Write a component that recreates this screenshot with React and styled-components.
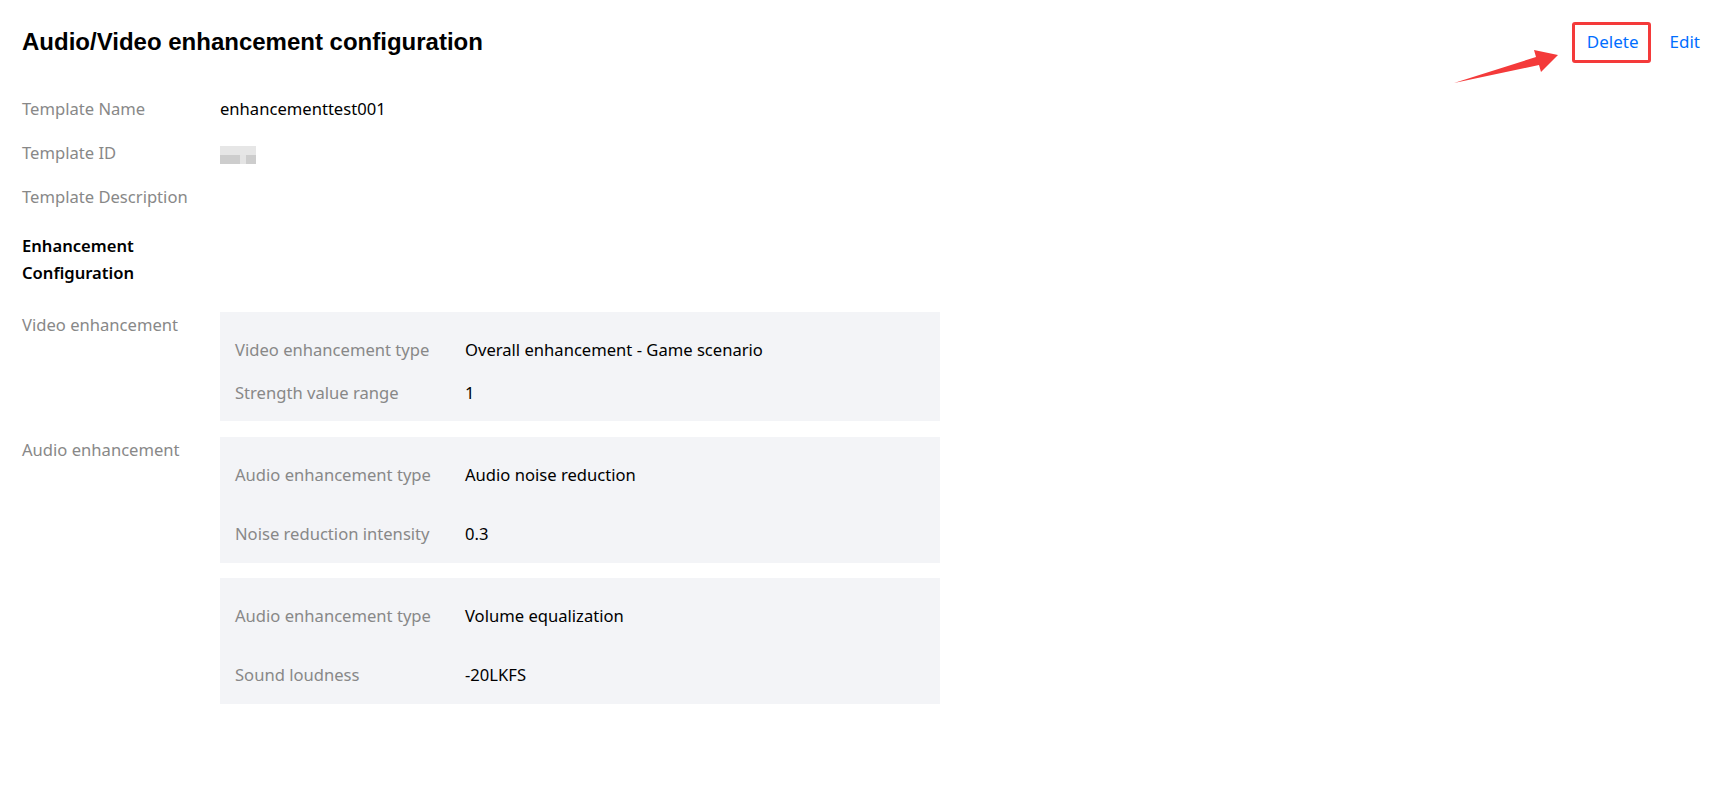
import React from "react";
import styled, { createGlobalStyle } from "styled-components";

const Global = createGlobalStyle`
  html, body { margin: 0; padding: 0; background: #fff; }
  body { font-family: "Noto Sans", "Open Sans", sans-serif; color: #000; }
`;

const Page = styled.div`
  padding: 0 27px 40px 22px;
  width: 1727px;
  box-sizing: border-box;
`;

const Header = styled.div`
  display: flex;
  align-items: center;
  justify-content: space-between;
  padding-top: 27px;
  height: 30px;
`;

const Title = styled.h1`
  margin: 0;
  font-family: "Liberation Sans", Arial, sans-serif;
  font-weight: 700;
  font-size: 24px;
  line-height: 30px;
  color: #000;
`;

const Actions = styled.div`
  display: flex;
  align-items: center;
  gap: 31px;
`;

const LinkWrap = styled.span`
  position: relative;
  display: inline-flex;
`;

const Link = styled.a`
  font-size: 17px;
  line-height: 24px;
  color: #006eff;
  text-decoration: none;
  cursor: pointer;
`;

const Highlight = styled.span`
  position: absolute;
  left: -15px;
  right: -12px;
  top: -8px;
  bottom: -9px;
  border: 3px solid #f43a3a;
  border-radius: 3px;
  pointer-events: none;
`;

const Arrow = styled.svg`
  position: absolute;
  left: -133px;
  top: 20px;
  overflow: visible;
  pointer-events: none;
`;

const Fields = styled.div`
  margin-top: 30px;
`;

const Row = styled.div`
  display: grid;
  grid-template-columns: 198px 1fr;
  align-items: center;
  min-height: 44px;
  font-size: 16.6px;
  line-height: 26px;
`;

const Label = styled.div`
  color: #888;
`;

const Value = styled.div`
  color: #000;
`;

const Masked = styled.span`
  display: inline-block;
  width: 36px;
  height: 18px;
  vertical-align: middle;
  background:
    linear-gradient(#e6e6e6, #e6e6e6) 0 0 / 36px 9px no-repeat,
    linear-gradient(90deg, #cdcdcd 0 20px, #e4e4e4 20px 26px, #cdcdcd 26px 36px) 0 9px / 36px 9px no-repeat;
`;

const SectionTitle = styled.div`
  margin-top: 13px;
  font-size: 16.6px;
  line-height: 27px;
  font-weight: 600;
  color: #000;
  width: 150px;
`;

const Sections = styled.div`
  margin-top: 26px;
  display: flex;
  flex-direction: column;
  gap: 16px;
`;

const Section = styled.div`
  display: grid;
  grid-template-columns: 198px 720px;
  align-items: start;
  font-size: 16.6px;
  line-height: 26px;
`;

const PanelStack = styled.div`
  display: flex;
  flex-direction: column;
  gap: 15px;
`;

const Panel = styled.div`
  background: #f3f4f7;
  padding: ${(p) => p.$pad};
`;

const PanelRow = styled.div`
  display: grid;
  grid-template-columns: 230px 1fr;
  align-items: center;
  height: ${(p) => p.$h}px;
  padding-left: 15px;
`;

const videoRows = [
  ["Video enhancement type", "Overall enhancement - Game scenario"],
  ["Strength value range", "1"],
];

const audioPanels = [
  [
    ["Audio enhancement type", "Audio noise reduction"],
    ["Noise reduction intensity", "0.3"],
  ],
  [
    ["Audio enhancement type", "Volume equalization"],
    ["Sound loudness", "-20LKFS"],
  ],
];

export default function App() {
  return (
    <Page>
      <Global />
      <Header>
        <Title>Audio/Video enhancement configuration</Title>
        <Actions>
          <LinkWrap>
            <Link>Delete</Link>
            <Highlight />
            <Arrow width="110" height="40" viewBox="0 0 110 40">
              <polygon
                points="0,33 82,7 80,0 104,5 87,22 85,15"
                fill="#f43a3a"
              />
            </Arrow>
          </LinkWrap>
          <Link>Edit</Link>
        </Actions>
      </Header>

      <Fields>
        <Row>
          <Label>Template Name</Label>
          <Value>enhancementtest001</Value>
        </Row>
        <Row>
          <Label>Template ID</Label>
          <Value>
            <Masked />
          </Value>
        </Row>
        <Row>
          <Label>Template Description</Label>
          <Value />
        </Row>
      </Fields>

      <SectionTitle>Enhancement Configuration</SectionTitle>

      <Sections>
        <Section>
          <Label>Video enhancement</Label>
          <PanelStack>
            <Panel $pad="16px 0 7px">
              {videoRows.map(([k, v]) => (
                <PanelRow key={k} $h={43}>
                  <Label>{k}</Label>
                  <Value>{v}</Value>
                </PanelRow>
              ))}
            </Panel>
          </PanelStack>
        </Section>
        <Section>
          <Label>Audio enhancement</Label>
          <PanelStack>
            {audioPanels.map((rows, i) => (
              <Panel key={i} $pad="9px 0 0">
                {rows.map(([k, v]) => (
                  <PanelRow key={k} $h={58.5}>
                    <Label>{k}</Label>
                    <Value>{v}</Value>
                  </PanelRow>
                ))}
              </Panel>
            ))}
          </PanelStack>
        </Section>
      </Sections>
    </Page>
  );
}
